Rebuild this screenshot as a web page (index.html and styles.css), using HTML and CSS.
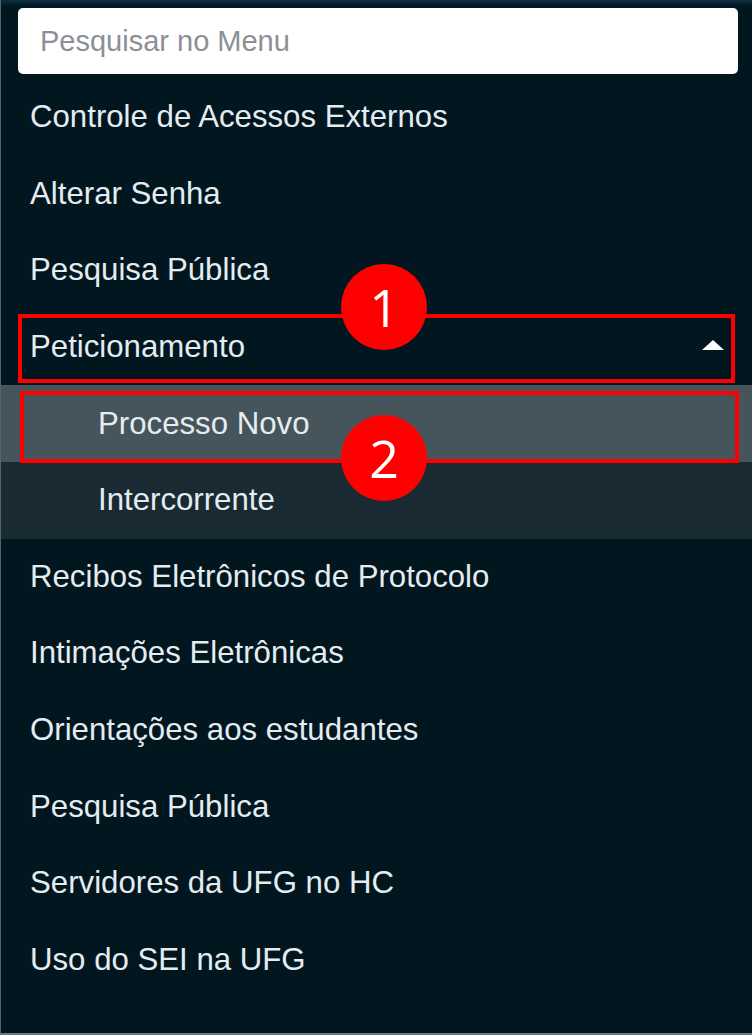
FILE: index.html
```html
<!DOCTYPE html>
<html lang="pt-BR">
<head>
  <meta charset="UTF-8" />
  <meta name="viewport" content="width=device-width,initial-scale=1.0" />
  <title>Menu | SEI</title>
  <link rel="stylesheet" href="styles.css">
</head>
<body>

<!-- MENU LATERAL -->
<aside class="sidebar">
  <div class="search">
    <input type="text" placeholder="Pesquisar no Menu">
  </div>

  <ul class="menu">
    <li><a href="#">Controle de Acessos Externos</a></li>
    <li><a href="#">Alterar Senha</a></li>
    <li><a href="#">Pesquisa Pública</a></li>
    <li class="open">
      <a href="#" class="toggle">Peticionamento <span class="caret"></span></a>
      <ul class="submenu">
        <li class="active"><a href="#">Processo Novo</a></li>
        <li><a href="#">Intercorrente</a></li>
      </ul>
      <!-- marcações do tutorial -->
      <div class="mark mark-1"></div>
      <div class="mark mark-2"></div>
      <span class="badge badge-1">1</span>
      <span class="badge badge-2">2</span>
    </li>
    <li><a href="#">Recibos Eletrônicos de Protocolo</a></li>
    <li><a href="#">Intimações Eletrônicas</a></li>
    <li><a href="#">Orientações aos estudantes</a></li>
    <li><a href="#">Pesquisa Pública</a></li>
    <li><a href="#">Servidores da UFG no HC</a></li>
    <li><a href="#">Uso do SEI na UFG</a></li>
  </ul>
</aside>

</body>
</html>
```

FILE: styles.css
```css
* {
  box-sizing: border-box;
  margin: 0;
  padding: 0;
}
html, body {
  height: 100%;
}
body {
  font-family: "Liberation Sans", Arial, sans-serif;
  background-color: #021620;
  color: #e4ecf0;
  overflow: hidden;
}

/* SIDEBAR */
.sidebar {
  height: 1035px;
  border-left: 1px solid #55656d;
  border-bottom: 2px solid #6b7980;
  background: linear-gradient(#0b3044 0, #021620 6px);
}

/* SEARCH */
.search {
  padding: 8px 14px 5px 17px;
}
.search input {
  width: 100%;
  height: 66px;
  border: none;
  border-radius: 5px;
  background: #fff;
  padding: 0 22px;
  font-family: "Liberation Sans", Arial, sans-serif;
  font-size: 29px;
  color: #333;
  outline: none;
}
.search input::placeholder {
  color: #8b9096;
}

/* MENU */
.menu {
  list-style: none;
}
.menu a {
  display: flex;
  align-items: center;
  height: 76.6px;
  padding: 0 29px;
  font-size: 31.2px;
  color: #e4ecf0;
  text-decoration: none;
}
.menu .open {
  position: relative;
}
.menu .toggle {
  justify-content: space-between;
  padding-right: 28px;
}
.caret {
  width: 0;
  height: 0;
  border-left: 11px solid transparent;
  border-right: 11px solid transparent;
  border-bottom: 10px solid #fff;
  margin-top: -4px;
}

.submenu {
  list-style: none;
  background-color: #1a2a33;
}
.submenu a {
  padding-left: 97px;
}
.submenu .active a {
  background-color: #46555c;
}

/* TUTORIAL MARKS */
.mark {
  position: absolute;
  border: 4px solid #ff0000;
  pointer-events: none;
}
.mark-1 {
  left: 17px;
  width: 717px;
  top: 5px;
  height: 69px;
}
.mark-2 {
  left: 19px;
  width: 719px;
  top: 82px;
  height: 72px;
}
.badge {
  position: absolute;
  left: 340px;
  width: 86px;
  height: 86px;
  border-radius: 50%;
  background: #ff0000;
  color: #fff;
  font-family: "Open Sans", "DejaVu Sans", sans-serif;
  font-size: 52px;
  line-height: 86px;
  text-align: center;
}
.badge-1 {
  top: -45px;
}
.badge-2 {
  top: 106px;
}
```
